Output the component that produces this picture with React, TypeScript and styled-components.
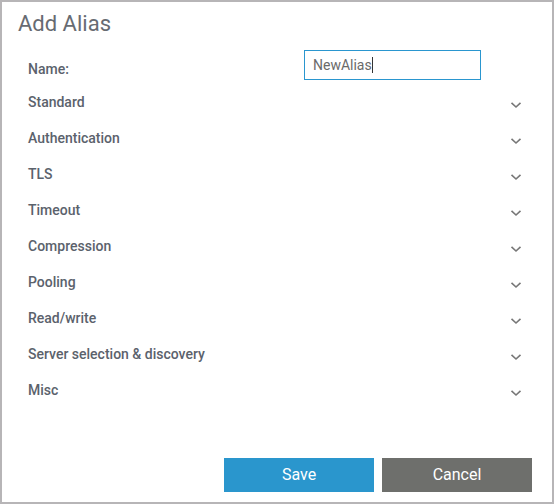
import React, { useEffect, useRef } from "react";
import styled, { createGlobalStyle } from "styled-components";

const GlobalStyle = createGlobalStyle`
  html, body { margin: 0; padding: 0; background: #ffffff; }
  body { font-family: Roboto, "Liberation Sans", Arial, sans-serif; }
  * { box-sizing: border-box; }
`;

const Dialog = styled.div`
  width: 554px;
  height: 504px;
  border: 2px solid #b7b5b7;
  background: #ffffff;
  display: flex;
  flex-direction: column;
`;

const Title = styled.h2`
  margin: 0;
  padding: 9px 16px 0;
  font-size: 22px;
  line-height: 26px;
  font-weight: 400;
  color: #676b72;
`;

const Form = styled.div`
  display: flex;
  flex-direction: column;
  padding: 0 30px 0 26px;
`;

const NameRow = styled.div`
  display: flex;
  align-items: flex-start;
  height: 47px;
`;

const Label = styled.span<{ $offset?: number }>`
  font-size: 14px;
  line-height: 20px;
  font-weight: 500;
  color: #5b626c;
  margin-top: ${(p) => (p.$offset ? `${p.$offset}px` : "0")};
`;

const NameLabel = styled(Label)`
  flex: 0 0 276px;
`;

const InputWrap = styled.div`
  position: relative;
  margin-top: 13px;
`;

const TextInput = styled.input`
  display: block;
  width: 177px;
  height: 30px;
  border: 1px solid #2a96cf;
  outline: none;
  padding: 0 8px;
  font-family: Roboto, "Liberation Sans", Arial, sans-serif;
  font-size: 14px;
  color: #6a6a6a;
  caret-color: transparent;
  background: #ffffff;
`;

const Caret = styled.span`
  position: absolute;
  left: 68px;
  top: 7px;
  width: 1px;
  height: 16px;
  background: #333333;
  pointer-events: none;
`;

const SectionRow = styled.div`
  height: 36px;
  display: flex;
  align-items: center;
  justify-content: space-between;
`;

const Chevron = styled.svg`
  width: 12px;
  height: 8px;
  margin-top: 6px;
  flex: none;
`;

const Spacer = styled.div`
  flex: 1;
`;

const Footer = styled.div`
  display: flex;
  justify-content: flex-end;
  gap: 8px;
  padding: 0 20px 10px 0;
`;

const Button = styled.button<{ $variant: "primary" | "secondary" }>`
  width: 150px;
  height: 34px;
  border: none;
  padding: 0 0 1px;
  font-family: Roboto, "Liberation Sans", Arial, sans-serif;
  font-size: 16px;
  font-weight: 400;
  color: #ffffff;
  background: ${(p) => (p.$variant === "primary" ? "#2a96cd" : "#6e6f6c")};
  cursor: pointer;
`;

const sections = [
  "Standard",
  "Authentication",
  "TLS",
  "Timeout",
  "Compression",
  "Pooling",
  "Read/write",
  "Server selection & discovery",
  "Misc",
];

export default function App() {
  const ref = useRef<HTMLInputElement>(null);
  useEffect(() => {
    const el = ref.current;
    if (el) {
      el.focus();
      const n = el.value.length;
      el.setSelectionRange(n, n);
    }
  }, []);

  return (
    <>
      <GlobalStyle />
      <Dialog>
        <Title>Add Alias</Title>
        <Form>
          <NameRow>
            <NameLabel $offset={22}>Name:</NameLabel>
            <InputWrap>
              <TextInput ref={ref} defaultValue="NewAlias" />
              <Caret />
            </InputWrap>
          </NameRow>
          {sections.map((s) => (
            <SectionRow key={s}>
              <Label>{s}</Label>
              <Chevron viewBox="0 0 12 8">
                <path
                  d="M1.5 1.8 L6 6 L10.5 1.8"
                  fill="none"
                  stroke="#777777"
                  strokeWidth="1.6"
                />
              </Chevron>
            </SectionRow>
          ))}
        </Form>
        <Spacer />
        <Footer>
          <Button $variant="primary">Save</Button>
          <Button $variant="secondary">Cancel</Button>
        </Footer>
      </Dialog>
    </>
  );
}
